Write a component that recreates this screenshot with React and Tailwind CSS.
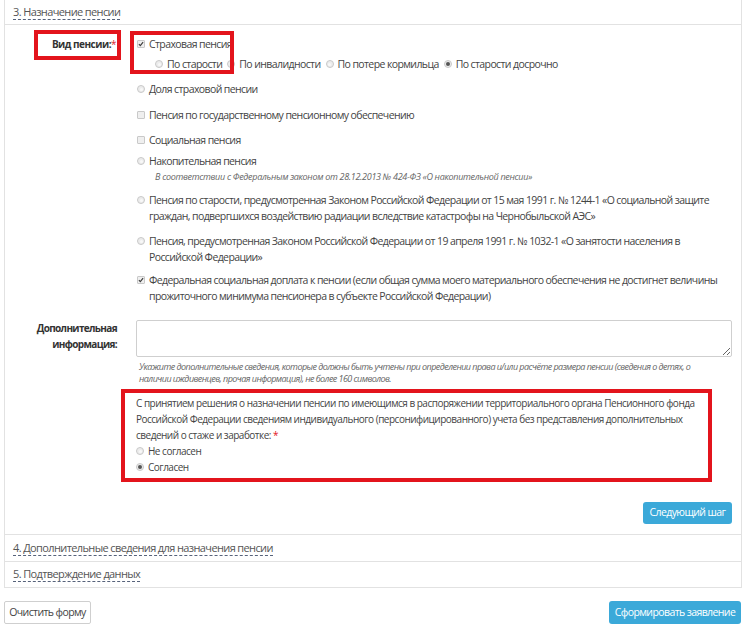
import React from "react";

const Check = ({ checked }) => (
  <span className="mt-[4px] inline-flex h-[8px] w-[8px] shrink-0 items-center justify-center rounded-[1px] border border-[#c9c9c9] bg-[#efefef]">
    {checked && (
      <svg width="8" height="8" viewBox="0 0 8 8">
        <path d="M1.2 4.2 L3.1 6.1 L6.8 1.6" fill="none" stroke="#3d3d3d" strokeWidth="1.6" />
      </svg>
    )}
  </span>
);

const Radio = ({ checked }) => (
  <span className="mt-[4px] inline-flex h-[8px] w-[8px] shrink-0 items-center justify-center rounded-full border border-[#c9c9c9] bg-[#ececec]">
    {checked ? (
      <span className="h-[4px] w-[4px] rounded-full bg-[#555]" />
    ) : (
      <span className="h-[3px] w-[3px] rounded-full bg-[#f8f8f8]" />
    )}
  </span>
);

const Option = ({ type = "radio", checked, className = "", children }) => (
  <div className={`flex items-start gap-[4px] ${className}`}>
    {type === "radio" ? <Radio checked={checked} /> : <Check checked={checked} />}
    <div className="whitespace-nowrap leading-[16px]">{children}</div>
  </div>
);

const SectionLink = ({ children }) => (
  <span className="border-b border-dashed border-[#56627a] text-[11px] leading-[14px] tracking-[-0.62px] text-[#555]">
    {children}
  </span>
);

export default function App() {
  return (
    <div
      className="min-h-[630px] w-[750px] bg-white text-[10.5px] tracking-[-0.6px] text-[#444]"
      style={{ fontFamily: '"Open Sans", "Noto Sans", sans-serif' }}
    >
      {/* accordion */}
      <div className="-mt-px ml-[4px] mr-[8px] border border-[#e2e2e2]">
        {/* 3 */}
        <div className="flex h-[25px] items-center border-b border-[#e2e2e2] pl-[8px] pt-[1px]">
          <SectionLink>3. Назначение пенсии</SectionLink>
        </div>

        <div className="relative pb-[10px] pr-[9px] pt-[11px]">
          {/* red box over the main choice */}
          <div className="pointer-events-none absolute left-[125px] top-[6px] h-[43px] w-[104px] border-4 border-[#e3141c]" />

          <div className="flex">
            <div className="flex w-[116px] shrink-0 justify-end">
              <div className="-mt-[6px] h-[30px] w-[87px] border-4 border-[#e3141c] pb-[4px] pr-[1px] pt-[2px] text-right text-[10px] font-bold leading-[16px] tracking-[-0.5px] text-[#333]">
                Вид пенсии:<span className="font-normal text-[#d9232d]">*</span>
              </div>
            </div>

            <div className="ml-[16px] min-w-0 flex-1">
              <Option type="check" checked>
                Страховая пенсия
              </Option>
              <div className="ml-[18px] mt-[4px] flex gap-[5px]">
                <Option>По старости</Option>
                <Option>По инвалидности</Option>
                <Option>По потере кормильца</Option>
                <Option checked>По старости досрочно</Option>
              </div>

              <Option className="mt-[9px]">Доля страховой пенсии</Option>
              <Option type="check" className="mt-[10px]">
                Пенсия по государственному пенсионному обеспечению
              </Option>
              <Option type="check" className="mt-[9px]">
                Социальная пенсия
              </Option>
              <Option className="mt-[5px]">Накопительная пенсия</Option>
              <div className="mt-px whitespace-nowrap pl-[18px] text-[9px] italic leading-[14px] tracking-[-0.3px] text-[#666]">
                В соответствии с Федеральным законом от 28.12.2013 № 424-ФЗ «О накопительной пенсии»
              </div>
              <Option className="mt-[8px]">
                Пенсия по старости, предусмотренная Законом Российской Федерации от 15 мая 1991 г. № 1244-1 «О социальной защите
                <br />
                граждан, подвергшихся воздействию радиации вследствие катастрофы на Чернобыльской АЭС»
              </Option>
              <Option className="mt-[9px]">
                Пенсия, предусмотренная Законом Российской Федерации от 19 апреля 1991 г. № 1032-1 «О занятости населения в
                <br />
                Российской Федерации»
              </Option>
              <Option type="check" checked className="mt-[7px]">
                Федеральная социальная доплата к пенсии (если общая сумма моего материального обеспечения не достигнет величины
                <br />
                прожиточного минимума пенсионера в субъекте Российской Федерации)
              </Option>
            </div>
          </div>

          <div className="mt-[16px] flex">
            <div className="w-[116px] shrink-0 pr-[4px] text-right text-[10px] font-bold leading-[16px] tracking-[-0.65px] text-[#333]">
              Дополнительная
              <br />
              информация:
            </div>
            <div className="ml-[15px] min-w-0 flex-1">
              <textarea className="block h-[37px] w-full rounded-[2px] border border-[#cfcfcf] bg-white" />
              <div className="mt-[4px] whitespace-nowrap pl-[3px] text-[9px] italic leading-[12px] tracking-[-0.55px] text-[#666]">
                Укажите дополнительные сведения, которые должны быть учтены при определении права и/или расчёте размера пенсии (сведения о детях, о
                <br />
                наличии иждивенцев, прочая информация), не более 160 символов.
              </div>

              <div className="-ml-[15px] mr-[20px] mt-[4px] border-4 border-[#e3141c] pb-[3px] pl-[11px] pt-[2px] text-[10px] leading-[16px] tracking-[-0.5px]">
                <div className="whitespace-nowrap">
                  С принятием решения о назначении пенсии по имеющимся в распоряжении территориального органа Пенсионного фонда
                  <br />
                  Российской Федерации сведениям индивидуального (персонифицированного) учета без представления дополнительных
                  <br />
                  сведений о стаже и заработке: <span className="text-[#e3141c]">*</span>
                </div>
                <Option>Не согласен</Option>
                <Option checked>Согласен</Option>
              </div>

              <div className="mt-[20px] flex justify-end">
                <button className="h-[22px] w-[89px] rounded-[3px] bg-[#3ba9d9] text-[10.5px] text-white">
                  Следующий шаг
                </button>
              </div>
            </div>
          </div>
        </div>

        {/* 4 */}
        <div className="flex h-[27px] items-center border-t border-[#e2e2e2] pl-[8px]">
          <SectionLink>4. Дополнительные сведения для назначения пенсии</SectionLink>
        </div>
        {/* 5 */}
        <div className="flex h-[26px] items-center border-t border-[#e2e2e2] pl-[8px]">
          <SectionLink>5. Подтверждение данных</SectionLink>
        </div>
      </div>

      <div className="ml-[4px] mr-[9px] mt-[13px] flex justify-between">
        <button className="h-[23px] w-[87px] rounded-[2px] border border-[#cfcfcf] bg-white text-[10.5px] text-[#444]">
          Очистить форму
        </button>
        <button className="h-[23px] w-[132px] rounded-[3px] bg-[#3ba9d9] text-[10.5px] text-white">
          Сформировать заявление
        </button>
      </div>
    </div>
  );
}
